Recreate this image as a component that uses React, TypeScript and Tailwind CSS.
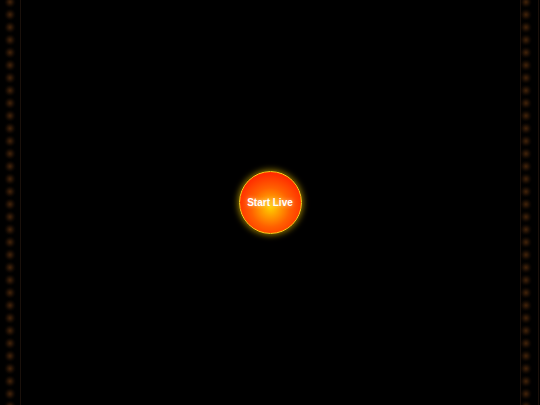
import React from 'react'

export default function App() {
  return (
    <div className="relative flex h-[405px] w-[540px] overflow-hidden bg-black">
      {/* film strip edges */}
      <div className="h-full w-[22px] shrink-0 bg-[radial-gradient(circle_at_10px_50%,rgba(85,45,12,0.8)_0,rgba(70,36,10,0.6)_2px,rgba(45,22,6,0.35)_4px,rgba(25,12,3,0.12)_5.5px,transparent_6.5px)] bg-[length:22px_12.656px] bg-[position:0_-4.3px]">
        <div className="ml-[19.5px] h-full w-px bg-[#1a100a]" />
      </div>
      <div className="flex flex-1 items-center justify-center">
        <button className="mt-[-1px] flex h-[63px] w-[63px] items-center justify-center rounded-full border border-[#ffd21a] bg-[radial-gradient(circle_at_50%_58%,#ffd000_0%,#ffa000_18%,#ff6000_42%,#ff3000_70%,#ff1c00_100%)] shadow-[0_0_6px_1px_rgba(255,210,0,0.6)]">
          <span className="font-['Liberation_Sans',Arial,sans-serif] text-[10px] font-bold text-white [text-shadow:0_0_4px_rgba(255,255,255,0.6)]">
            Start Live
          </span>
        </button>
      </div>
      <div className="relative h-full w-[22px] shrink-0 bg-[radial-gradient(circle_at_8px_50%,rgba(85,45,12,0.8)_0,rgba(70,36,10,0.6)_2px,rgba(45,22,6,0.35)_4px,rgba(25,12,3,0.12)_5.5px,transparent_6.5px)] bg-[length:22px_12.656px] bg-[position:0_-4.3px]">
        <div className="flex h-full justify-between pl-[2px] pr-[1.5px]">
          <div className="h-full w-px bg-[#1a100a]" />
          <div className="h-full w-px bg-[#1a100a]" />
        </div>
      </div>
    </div>
  )
}
